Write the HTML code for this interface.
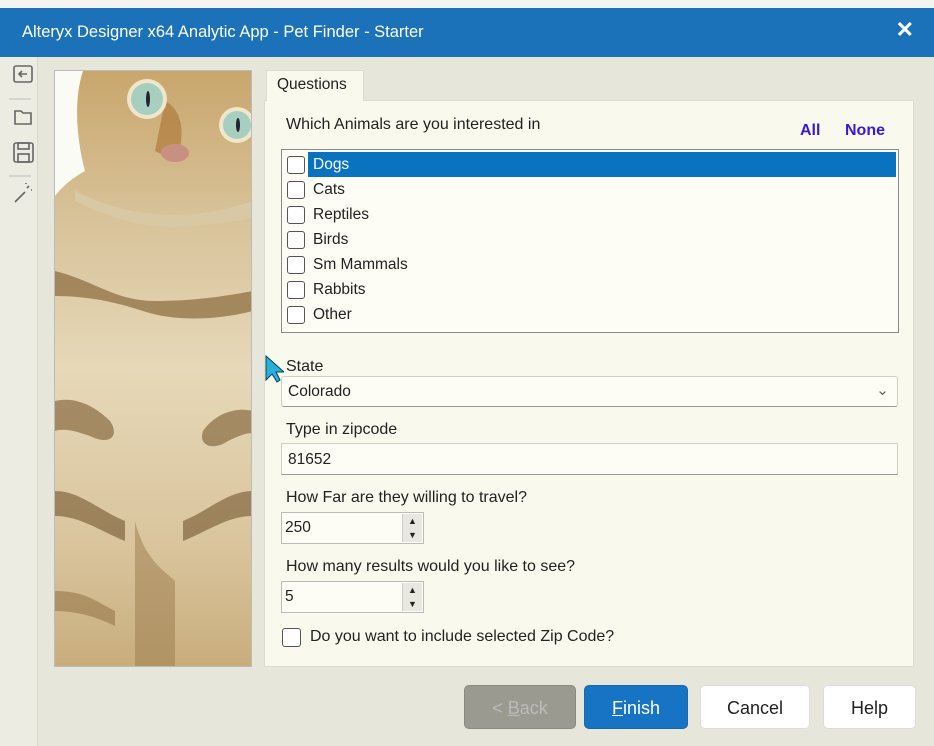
<!DOCTYPE html>
<html><head><style>
*{margin:0;padding:0;box-sizing:border-box}
body{width:934px;height:746px;overflow:hidden;background:#e6e6da;font-family:"Liberation Sans",sans-serif;font-size:15px;color:#222;position:relative}
.a{position:absolute}
.title{left:0;top:8px;width:934px;height:49px;background:#1b72b9;color:#fff;font-size:16.5px;line-height:49px;padding-left:22px}
.tb{left:0;top:57px;width:38px;height:689px;background:#ececE2;border-right:1px solid #d8d8cc}
.img{left:54px;top:70px;width:198px;height:597px;border:1px solid #bbb;background:#d8c49a;overflow:hidden}
.tab{left:266px;top:70px;width:98px;height:31px;background:#f9f9ee;border:1px solid #dcdccf;border-bottom:none;font-size:15.5px;padding:5px 0 0 10px}
.panel{left:264px;top:100px;width:650px;height:567px;background:#f9f9ee;border:1px solid #dcdccf}
.lbl{font-size:16px}
.list{left:281px;top:149px;width:618px;height:184px;background:#fdfdf6;border:1px solid #8a8a8a;font-size:15.5px}
.item{position:absolute;left:4px;height:25px;width:610px;line-height:25px}
.cb{position:absolute;left:1px;top:4px;width:18px;height:18px;border:1.5px solid #555;border-radius:3px;background:#fff}
.item span{position:absolute;left:27px}
.sel span{background:#0a73c0;color:#fff;left:22px;width:588px;padding-left:5px}
.inp{background:#fdfdf6;border:1px solid #d0d0c4;border-bottom:1.5px solid #999;font-size:15.5px;padding-left:6px}
.spin{position:absolute;right:1px;top:1px;width:20px;height:28px;background:#e8e8e0;border-left:1px solid #ccc}
.btn{top:685px;height:44px;border-radius:5px;text-align:center;line-height:44px;font-size:18px;background:#fff;border:1px solid #ddd}
a{color:#3818d8;font-weight:bold;font-size:16px}
</style></head><body>
<div class="a" style="left:0;top:0;width:934px;height:8px;background:#f4f4f0"></div>
<div class="a title">Alteryx Designer x64 Analytic App - Pet Finder - Starter</div>
<div class="a" style="right:20px;top:17px;color:#fff;font-size:22px;font-weight:bold">✕</div>
<div class="a tb">
<svg width="38" height="160" style="position:absolute;left:0;top:0" fill="none" stroke="#666" stroke-width="1.6">
<rect x="14" y="9" width="18" height="16" rx="2"/><path d="M27 17h-8m3-3l-3 3 3 3"/>
<line x1="9" y1="42" x2="31" y2="42" stroke="#ccc"/>
<path d="M15 54h6l2 2h8v11H15z"/>
<rect x="14" y="86" width="19" height="19" rx="2"/><rect x="18" y="86" width="11" height="6"/><rect x="18" y="97" width="11" height="8"/>
<line x1="9" y1="119" x2="31" y2="119" stroke="#ccc"/>
<path d="M15 145l10-10m2-4l2-2m2 4l1 0m-6-6v-1"/>
</svg></div>
<div class="a img">
<svg width="198" height="597">
<defs><linearGradient id="g" x1="0" y1="0" x2="0" y2="1"><stop offset="0" stop-color="#c9a66c"/><stop offset=".25" stop-color="#d8c39a"/><stop offset=".5" stop-color="#e6d8b8"/><stop offset=".8" stop-color="#d9c49c"/><stop offset="1" stop-color="#c8ad7c"/></linearGradient></defs>
<rect width="198" height="597" fill="url(#g)"/>
<path d="M0 0h28C18 30 22 70 30 100 12 110 4 120 0 125z" fill="#fbfbf6"/>
<path d="M20 130c40 20 80 30 120 25s50-5 58-10v-15C140 150 80 150 20 120z" fill="#d9c8a4"/>
<path d="M0 200c40 10 60 30 100 30s70-5 98-10v20c-40 10-80 10-110 0S30 225 0 225z" fill="#8a6a3c" opacity=".7"/>
<path d="M0 330c20-5 40 5 55 20 10 15 0 25-20 15-15-5-25-8-35-5z" fill="#7a5a30" opacity=".6"/>
<path d="M198 340c-20-5-40 5-50 20-5 15 10 20 25 10 10-5 18-8 25-8z" fill="#7a5a30" opacity=".6"/>
<path d="M0 420c25 0 45 20 70 30v20c-25-10-45-25-70-25z" fill="#6a4a24" opacity=".55"/>
<path d="M198 420c-25 0-45 20-70 30v20c25-10 45-25 70-25z" fill="#6a4a24" opacity=".55"/>
<path d="M80 450c10 40 30 50 40 60v87H80z" fill="#9a7a4c" opacity=".5"/>
<path d="M0 520c30 0 40 10 60 20v15C40 545 20 540 0 540z" fill="#8a6a3c" opacity=".5"/>
<path d="M110 30c20 10 20 40 10 60l-20-10z" fill="#b07a3c" opacity=".7"/>
<circle cx="92" cy="28" r="20" fill="#f0e6cc"/><circle cx="92" cy="28" r="16" fill="#a6cfc0"/><ellipse cx="93" cy="28" rx="2" ry="8" fill="#223"/>
<circle cx="182" cy="54" r="18" fill="#f0e6cc"/><circle cx="182" cy="54" r="14" fill="#a6cfc0"/><ellipse cx="183" cy="54" rx="2" ry="7" fill="#223"/>
<ellipse cx="120" cy="82" rx="14" ry="9" fill="#c89080"/>
</svg></div>
<div class="a panel"></div>
<div class="a tab">Questions</div>
<div class="a lbl" style="left:286px;top:116px">Which Animals are you interested in</div>
<div class="a" style="left:800px;top:122px"><a>All</a></div>
<div class="a" style="left:845px;top:122px"><a>None</a></div>
<div class="a list">
<div class="item sel" style="top:2px"><i class="cb"></i><span>Dogs</span></div>
<div class="item" style="top:27px"><i class="cb"></i><span>Cats</span></div>
<div class="item" style="top:52px"><i class="cb"></i><span>Reptiles</span></div>
<div class="item" style="top:77px"><i class="cb"></i><span>Birds</span></div>
<div class="item" style="top:102px"><i class="cb"></i><span>Sm Mammals</span></div>
<div class="item" style="top:127px"><i class="cb"></i><span>Rabbits</span></div>
<div class="item" style="top:152px"><i class="cb"></i><span>Other</span></div>
</div>
<svg class="a" style="left:264px;top:354px" width="20" height="30"><path d="M2 2v24l6-6 5 8 3-2-4-8h8z" fill="#2ab0d8" stroke="#045" stroke-width="1"/></svg>
<div class="a lbl" style="left:286px;top:358px">State</div>
<div class="a inp" style="left:281px;top:376px;width:617px;height:31px;line-height:30px;border-radius:3px">Colorado<span style="position:absolute;right:8px;top:-1px;color:#666">⌄</span></div>
<div class="a lbl" style="left:286px;top:421px">Type in zipcode</div>
<div class="a inp" style="left:281px;top:443px;width:617px;height:32px;line-height:31px">81652</div>
<div class="a lbl" style="left:286px;top:489px">How Far are they willing to travel?</div>
<div class="a inp" style="left:281px;top:512px;width:143px;height:32px;line-height:30px;border:1px solid #bbb;padding-left:3px">250<div class="spin"><div style="font-size:9px;line-height:14px;text-align:center">▲<br>▼</div></div></div>
<div class="a lbl" style="left:286px;top:558px">How many results would you like to see?</div>
<div class="a inp" style="left:281px;top:581px;width:143px;height:32px;line-height:30px;border:1px solid #bbb;padding-left:3px">5<div class="spin"><div style="font-size:9px;line-height:14px;text-align:center">▲<br>▼</div></div></div>
<div class="a" style="left:282px;top:628px;width:19px;height:19px;border:1.5px solid #555;border-radius:3px;background:#fff"></div>
<div class="a lbl" style="left:310px;top:628px">Do you want to include selected Zip Code?</div>
<div class="a btn" style="left:464px;width:112px;background:#9a9a90;color:#bbb;border-color:#8a8a80">&lt; <u>B</u>ack</div>
<div class="a btn" style="left:584px;width:104px;background:#1774c4;color:#fff;border-color:#1568b0"><u>F</u>inish</div>
<div class="a btn" style="left:700px;width:110px">Cancel</div>
<div class="a btn" style="left:823px;width:93px">Help</div>
</body></html>
